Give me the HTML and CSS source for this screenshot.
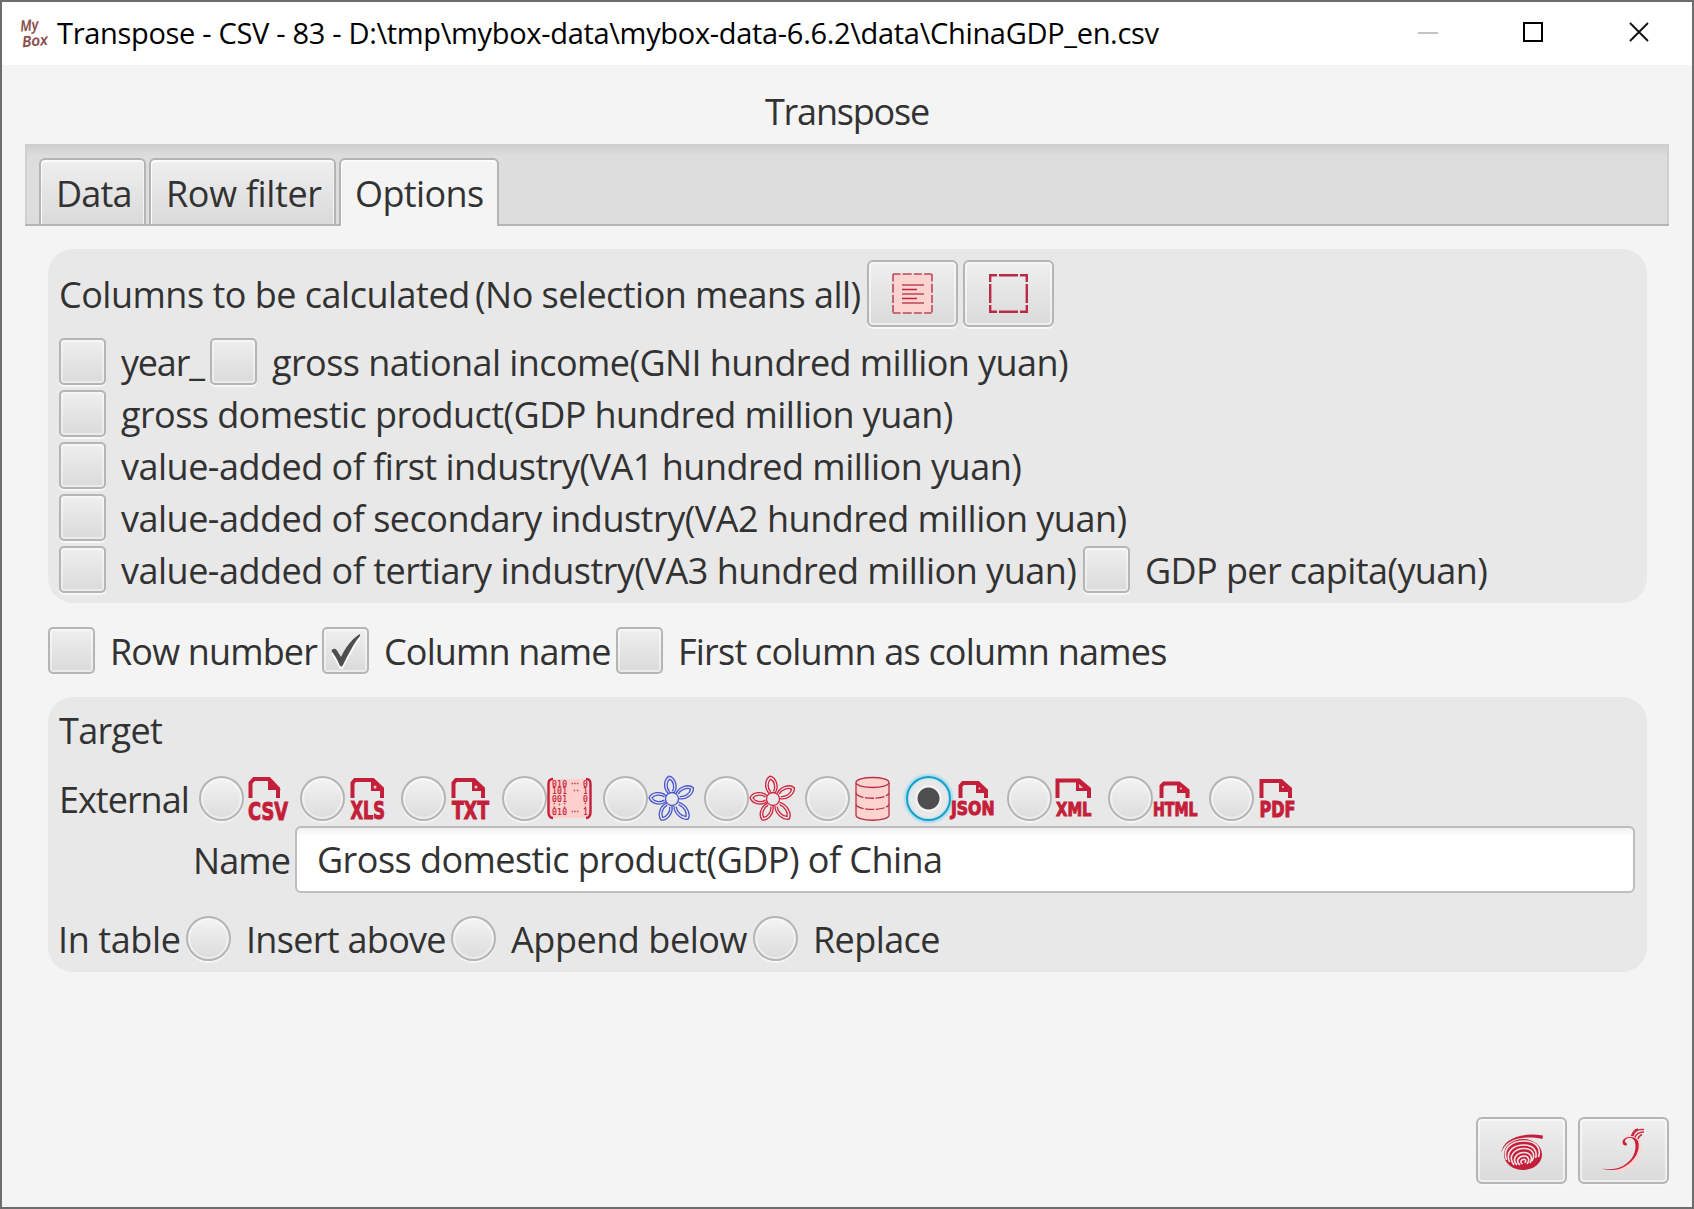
FILE: index.html
```html
<!DOCTYPE html>
<html lang="en">
<head>
<meta charset="utf-8">
<title>Transpose</title>
<link rel="stylesheet" href="styles.css">
</head>
<body>
<svg class="defs" width="0" height="0" aria-hidden="true">
  <defs>
    <g id="petal">
      <path d="M-3 -6C-8 -12 -5.500 -21 0 -23C5.500 -21 8 -12 3 -6"/>
      <path d="M-1.500 -7.500C-4.600 -12 -3.200 -18 0 -20C3.200 -18 4.600 -12 1.500 -7.500"/>
    </g>
    <g id="flower" fill="none" stroke-width="1.300">
      <circle cx="23.200" cy="23" r="6.500"/>
      <use href="#petal" transform="translate(23.200 23) rotate(-7)"/>
      <use href="#petal" transform="translate(23.200 23) rotate(62) scale(1 1.050)"/>
      <use href="#petal" transform="translate(23.200 23) rotate(141) scale(1 1.120)"/>
      <use href="#petal" transform="translate(23.200 23) rotate(207) scale(1 1.030)"/>
      <use href="#petal" transform="translate(23.200 23) rotate(273)"/>
    </g>
  </defs>
</svg>
<div class="window">
  <header class="titlebar">
    <svg class="logo" viewBox="0 0 32 34"><g transform="rotate(-6 16 17)"><text x="3" y="14" textLength="18" lengthAdjust="spacingAndGlyphs">My</text><text x="3" y="30" textLength="26" lengthAdjust="spacingAndGlyphs">Box</text></g></svg>
    <span class="caption">Transpose - CSV - 83 - D:\tmp\mybox-data\mybox-data-6.6.2\data\ChinaGDP_en.csv</span>
    <div class="controls">
      <svg viewBox="0 0 22 22"><path d="M2 11H22" stroke="#c4c4c4" stroke-width="2"/></svg>
      <svg viewBox="0 0 22 22"><path d="M2 1H20V19H2Z" stroke="#000" stroke-width="2"/></svg>
      <svg viewBox="0 0 22 22"><path d="M2 1L20 19M20 1L2 19" stroke="#111" stroke-width="1.900"/></svg>
    </div>
  </header>

  <h1 class="heading">Transpose</h1>

  <nav class="tabs">
    <div class="tab tab-data">Data</div>
    <div class="tab tab-filter">Row filter</div>
    <div class="tab tab-options active">Options</div>
  </nav>

  <main class="content">
    <section class="panel columns">
      <div class="row head">
        <span class="label w-columns">Columns to be calculated</span>
        <span class="label w-hint">(No selection means all)</span>
        <button class="btn"><svg width="41" height="41" viewBox="0 0 41 41" fill="none" stroke="#b8485c" stroke-width="1.600"><path d="M1 1H40V40H1Z" fill="#fdd3d0" stroke="none"/><path d="M1 1H40M1 40H40" stroke-dasharray="7.500 2.200 9 2.200 8 2.200"/><path d="M1 1V40M40 1V40" stroke-dasharray="7.500 2.200 9 2.200 8 2.200"/><path d="M10 12H32M10 21H32M10 30H32"/><path d="M10 16.500H25M10 25.500H25" stroke="#c5213c"/></svg></button>
        <button class="btn"><svg width="39" height="39" viewBox="0 0 39 39" fill="none" stroke="#b92a47" stroke-width="2.400"><path d="M1.200 8V1.200H8M10 1.200H29M31 1.200H37.800V8M37.800 10V29M37.800 31V37.800H31M29 37.800H10M8 37.800H1.200V31M1.200 29V10"/></svg></button>
      </div>
      <div class="row check-row"><i class="box"></i><span class="label w-year">year_</span><i class="box"></i><span class="label s-gni">gross national income(GNI hundred million yuan)</span></div>
      <div class="row check-row"><i class="box"></i><span class="label s-gdp">gross domestic product(GDP hundred million yuan)</span></div>
      <div class="row check-row"><i class="box"></i><span class="label">value-added of first industry(VA1 hundred million yuan)</span></div>
      <div class="row check-row"><i class="box"></i><span class="label">value-added of secondary industry(VA2 hundred million yuan)</span></div>
      <div class="row check-row"><i class="box"></i><span class="label w-va3">value-added of tertiary industry(VA3 hundred million yuan)</span><i class="box"></i><span class="label per-capita">GDP per capita(yuan)</span></div>
    </section>

    <div class="row flags">
      <i class="box"></i><span class="label w-rownum">Row number</span>
      <i class="box"><svg width="32" height="36" viewBox="0 0 32 36"><path d="M1.500 20C2.500 17 5.500 17 7 19.500L11 26C15 17 21 9 29 3.500C30 3 30.500 4 30 5C24 12 18 24 13 34C12 36 10.500 36 9.500 34C7 28 4.500 24 1.500 20Z" fill="#fff" transform="translate(0 1.500)"/><path d="M1.500 18C2.500 15 5.500 15 7 17.500L11 24C15 15 21 7 29 1.500C30 1 30.500 2 30 3C24 10 18 22 13 32C12 34 10.500 34 9.500 32C7 26 4.500 22 1.500 18Z" fill="#4e4e4e"/></svg></i><span class="label w-colname">Column name</span>
      <i class="box"></i><span class="label s-first">First column as column names</span>
    </div>

    <section class="panel target">
      <span class="label t-target">Target</span>
      <div class="row formats">
        <span class="label w-external">External</span>
        <div class="format"><i class="radio"></i><svg class="doc" viewBox="0 0 56 46"><path class="o" d="M6.500 22V7L10 3H25L34 12.500V22"/><path class="f" d="M24 2L37 14H24Z"/><text x="4" y="44" font-size="25" textLength="40" lengthAdjust="spacingAndGlyphs">CSV</text></svg></div>
        <div class="format"><i class="radio"></i><svg class="doc" viewBox="0 0 56 46"><path class="o" d="M7.500 22V7L10 4H28L37 12.500V22"/><path class="f" d="M26 2.500L39 15H26Z"/><circle class="h" cx="30" cy="11" r="1.500"/><text x="5.500" y="43" font-size="24" textLength="34.500" lengthAdjust="spacingAndGlyphs">XLS</text></svg></div>
        <div class="format"><i class="radio"></i><svg class="doc" viewBox="0 0 56 46"><path class="o" d="M7.500 22V7L10 4H28L37 12.500V22"/><path class="f" d="M26 2.500L39 15H26Z"/><circle class="h" cx="30" cy="11" r="1.500"/><text x="6" y="43" font-size="24" textLength="37" lengthAdjust="spacingAndGlyphs">TXT</text></svg></div>
        <div class="format"><i class="radio"></i><svg class="doc matrix" viewBox="0 0 56 46"><rect x="2" y="3" width="40" height="39" rx="3" fill="#fdd0cd"/><path d="M6 3C2.500 3 1.500 4.500 1.500 8V36C1.500 40 2.500 42 6 42M39 3C42.500 3 43.500 4.500 43.500 8V36C43.500 40 42.500 42 39 42" stroke="#c41f3a" stroke-width="2.400" fill="none"/><g><text x="5" y="11" textLength="15">010</text><text x="23" y="11" textLength="10">···</text><text x="36" y="11">0</text><text x="5" y="18" textLength="15">101</text><text x="25" y="18" textLength="8">··</text><text x="36" y="18">1</text><text x="5" y="25.500" textLength="15">001</text><text x="36" y="25.500">0</text><text x="5" y="32" textLength="15">:·:</text><text x="36" y="32">:</text><text x="5" y="39" textLength="15">010</text><text x="23" y="39" textLength="10">···</text><text x="36" y="39">1</text></g></svg></div>
        <div class="format"><i class="radio"></i><svg class="doc" viewBox="0 0 56 46"><use href="#flower" stroke="#4a56cf" transform="translate(.8 0)"/></svg></div>
        <div class="format"><i class="radio"></i><svg class="doc" viewBox="0 0 56 46"><use href="#flower" stroke="#d02440" transform="translate(.8 0)"/></svg></div>
        <div class="format"><i class="radio"></i><svg class="doc" viewBox="0 0 56 46" fill="none" stroke="#b93149" stroke-width="1.300"><path d="M6 6.500V39C6 46 39 46 39 39V6.500" fill="#fdd3d0"/><ellipse cx="22.500" cy="6.500" rx="16.500" ry="5" fill="#fdd3d0"/><path d="M6 17C8 24 37 24 39 17M6 28.500C8 35 37 35 39 28.500" stroke-dasharray="9 1.500"/></svg></div>
        <div class="format"><i class="radio selected"></i><svg class="doc" viewBox="0 0 56 46"><path class="o" d="M9.500 22V10L12 7H27L35 14.500V22"/><path class="f" d="M25 5.500L37 17H25Z"/><circle class="h" cx="28.500" cy="12.500" r="1"/><text x="0" y="39" font-size="19" textLength="43.500" lengthAdjust="spacingAndGlyphs">JSON</text></svg></div>
        <div class="format"><i class="radio"></i><svg class="doc" viewBox="0 0 56 46"><path class="o" d="M5.500 22V4.500H27L37 13V22"/><path class="f" d="M24 2.500L39 15H24Z"/><path class="h" d="M27 8L31 12H27Z"/><text x="4" y="39.500" font-size="19" textLength="35.500" lengthAdjust="spacingAndGlyphs">XML</text></svg></div>
        <div class="format"><i class="radio"></i><svg class="doc" viewBox="0 0 56 46"><path class="o" d="M8.500 22V10L11 7.500H26L34.500 14.500V22"/><path class="f" d="M24 5.500L37 17H24Z"/><circle class="h" cx="28" cy="12.500" r="1"/><text x="0" y="39.500" font-size="19" textLength="44.500" lengthAdjust="spacingAndGlyphs">HTML</text></svg></div>
        <div class="format"><i class="radio"></i><svg class="doc" viewBox="0 0 56 46"><path class="o" d="M7.500 22V5H27L36 13V22"/><path class="f" d="M25 3L38 16H25Z"/><circle class="h" cx="29" cy="11" r="1"/><text x="5.500" y="41" font-size="21" textLength="36" lengthAdjust="spacingAndGlyphs">PDF</text></svg></div>
      </div>
      <div class="row name-row"><span class="label w-name">Name</span><div class="field">Gross domestic product(GDP) of China</div></div>
      <div class="row in-table">
        <span class="label w-table">In table</span>
        <i class="radio"></i><span class="label w-insert">Insert above</span>
        <i class="radio"></i><span class="label w-append">Append below</span>
        <i class="radio"></i><span class="label t-replace">Replace</span>
      </div>
    </section>
  </main>

  <footer class="actions">
    <button class="btn"><svg class="swirl" width="44" height="38" viewBox="0 0 44 38"><path d="M1 20C3 6 20 -1 43 2.500L42.500 6C22 2 6 6 1 20Z" fill="#c41f3a"/><ellipse cx="23" cy="21.500" rx="19" ry="15.500" fill="#c41f3a"/><g fill="none" stroke="#f2e3e4" stroke-width="1.600"><path d="M6.500 27C2 14 13 8 24 8C36 8 41.500 15 38.500 24"/><path d="M9.500 29C5 18 14 12 24 12C33 12 38 18 35.500 25"/><path d="M14 32C7 23 15 15.500 24 15.500C32 15.500 36 21 32 28"/><path d="M17 32C11 26 17 19.500 24 19.500C31 19.500 33 25 30 30"/><path d="M20 32C15 28 19 23 24 23C29 23 30 28 27 31"/><path d="M22.500 31C19 28.500 22 26 24.500 26.500C26.500 27 26 29.500 24.500 29.500"/></g></svg></button>
    <button class="btn"><svg width="56" height="48" viewBox="0 0 56 48" fill="none"><path d="M20 43C38 41 45 26 43 17C41 10 34 8 30 11" stroke="#fbd6d5" stroke-width="4.500"/><path d="M5.700 41.500C14 44 22 43.500 28 40C39 34 45 23 42 14C39 8 27 9 26.500 15C26.500 19 31 19.500 31 17C30.500 15 28.500 16 29 13.500C31 10 37 9.500 39 15C41 24 37 33 27 39C20 42.500 13 43 5.700 41.500Z" fill="#c8213a"/><path d="M37 9C38 4 42 2 48 2.500M39 10.500C40 7 43 5 48 5M42 12C42.500 9.500 44 8.500 46 7.500M35.500 9C37 5 38 3 42 2" stroke="#cb2a42" stroke-width="1.500"/></svg></button>
  </footer>
</div>
</body>
</html>
```
FILE: styles.css
```css
* { box-sizing: border-box; }
body { margin: 0; font-family: "Open Sans", "Noto Sans", sans-serif; font-size: 36px; color: #323232; letter-spacing: -0.5px; }
.defs { display: block; position: absolute; }
.window { width: 1694px; height: 1209px; border: 2px solid #6e6d6e; background: #f4f4f4; display: flex; flex-direction: column; overflow: hidden; }

/* title bar */
.titlebar { height: 63px; flex: none; background: #fff; display: flex; align-items: center; padding: 0 42px 2px 16px; }
.logo { width: 32px; height: 34px; margin-right: 7px; flex: none; overflow: visible; fill: #8b4a4a; stroke: #8b4a4a; stroke-width: .2; font: italic 600 15px "Open Sans", sans-serif; letter-spacing: 0; }
.caption { font-size: 29px; line-height: 40px; letter-spacing: -0.315px; color: #000; white-space: nowrap; }
.controls { margin-left: auto; display: flex; gap: 84px; }
.controls svg { width: 22px; height: 22px; fill: none; }

.heading { margin: 0; height: 79px; flex: none; padding-top: 23px; line-height: 48px; font-size: 36px; font-weight: 400; letter-spacing: -1.2px; text-align: center; }

/* tabs */
.tabs { margin: 0 23px; height: 82px; flex: none; display: flex; align-items: flex-end; gap: 3px; padding-left: 14px; border-bottom: 2px solid #b4b4b4; background: linear-gradient(#cdcdcd, #dddddd 12px); box-shadow: inset 2px 0 1px #cfcfcf, inset -2px 0 1px #cfcfcf; }
.tab { height: 66px; border: 2px solid #b4b4b4; border-bottom: 0; border-radius: 6px 6px 0 0; background: linear-gradient(#efefef, #dadada); box-shadow: inset 1px 2px 0 #fbfbfb, inset -1px 0 0 #f4f4f4; line-height: 48px; padding: 10px 0 0 15px; white-space: nowrap; }
.tab-data { width: 107px; letter-spacing: -0.8px; }
.tab-filter { width: 187px; letter-spacing: -0.35px; }
.tab-options { width: 160px; padding-left: 14px; letter-spacing: -0.6px; }
.tab.active { height: 68px; margin-bottom: -2px; padding-bottom: 2px; background: #f4f4f4; }

/* content */
.content { padding: 23px 45px 0 46px; }
.panel { background: #e8e8e8; border-radius: 25px; }
.columns { height: 354px; padding: 11px 10px; }
.row { display: flex; align-items: center; }
.label { flex: none; line-height: 48px; margin-top: 2px; white-space: nowrap; }
.head { height: 67px; margin-bottom: 11px; }
.head .btn { margin-right: 5px; }
.w-columns { width: 416px; padding-left: 1px; letter-spacing: -0.5px; }
.w-hint { width: 393px; padding-left: 1px; letter-spacing: -0.54px; }
.check-row { height: 47px; margin-bottom: 5px; padding-left: 1px; }
.box { flex: none; width: 47px; height: 47px; border: 2px solid #b5b5b5; border-radius: 5px; background: linear-gradient(#efefef, #dadada); box-shadow: inset 0 0 0 2px rgba(255,255,255,.45), 0 2px 0 #f7f7f7; display: flex; align-items: center; justify-content: center; }
.box + .label { margin-left: 15px; }
.w-year { width: 89px; letter-spacing: -1.2px; }
.s-gni, .s-gdp { letter-spacing: -0.57px; }
.w-va3 { width: 962px; }
.box + .per-capita { margin-left: 15px; letter-spacing: -0.6px; }
.flags { height: 47px; margin: 24px 0 23px; }
.flags .box + .label { margin-left: 15px; }
.w-rownum { width: 212px; letter-spacing: -0.85px; }
.w-colname { width: 232px; letter-spacing: -0.85px; }
.s-first { letter-spacing: -0.79px; }

/* target */
.target { height: 275px; padding: 9px 10px 0 9px; }
.t-target { display: block; margin: 0; height: 70px; padding: 1px 0 0 2px; letter-spacing: -0.66px; }
.formats { height: 45px; }
.w-external { width: 142px; padding-left: 2px; letter-spacing: -1px; }
.format { width: 101px; height: 45px; display: flex; flex: none; }
.radio { flex: none; width: 45px; height: 45px; border: 2px solid #b5b5b5; border-radius: 50%; background: linear-gradient(#f3f3f3, #dcdcdc); box-shadow: inset 0 0 0 2px rgba(255,255,255,.45), 0 2px 0 #f5f5f5; }
.radio.selected { border: 2.500px solid #129fca; box-shadow: 0 0 2px 2px #a5dcf0, inset 0 0 2px 1px #b8e2f2; background: radial-gradient(circle, #4e4e4e 10.500px, #fafafa 11.500px, #e8e8e8 14px, #eaeaea); }
.doc { width: 56px; height: 46px; flex: none; overflow: visible; font-family: "DejaVu Sans Condensed", "DejaVu Sans", sans-serif; font-weight: bold; letter-spacing: 0; }
.doc text { fill: #c41f3a; stroke: #c41f3a; stroke-width: 1; }
.doc .o { fill: none; stroke: #c41f3a; stroke-width: 4; }
.doc .f { fill: #c41f3a; }
.doc .h { fill: #f0c4c8; }
.doc.matrix text { font: 8px "DejaVu Sans Mono", monospace; stroke-width: .2; }
.name-row { height: 67px; margin-top: 5px; }
.w-name { width: 102px; margin-left: 136px; letter-spacing: -0.9px; }
.field { width: 1340px; height: 67px; border: 2px solid #bdbdbd; border-radius: 6px; background: linear-gradient(#f1f1f1, #fff 8px); line-height: 48px; padding: 8px 0 0 20px; letter-spacing: -0.55px; white-space: nowrap; }
.in-table { height: 45px; margin-top: 23px; }
.w-table { width: 129px; padding-left: 1px; letter-spacing: -0.4px; }
.in-table .radio + .label { margin-left: 15px; }
.w-insert { width: 205px; letter-spacing: -0.7px; }
.w-append { width: 242px; letter-spacing: -0.45px; }
.in-table .t-replace { letter-spacing: -0.6px; }

/* buttons */
.btn { width: 91px; height: 67px; padding: 0; flex: none; border: 2px solid #b5b5b5; border-radius: 6px; background: linear-gradient(#efefef, #dadada); box-shadow: inset 0 0 0 2px rgba(255,255,255,.55), 0 2px 0 #f7f7f7; display: flex; align-items: center; justify-content: center; }
.actions { margin-top: auto; padding: 0 23px 23px; display: flex; justify-content: flex-end; gap: 11px; }
.swirl { margin-top: 3px; }
```
